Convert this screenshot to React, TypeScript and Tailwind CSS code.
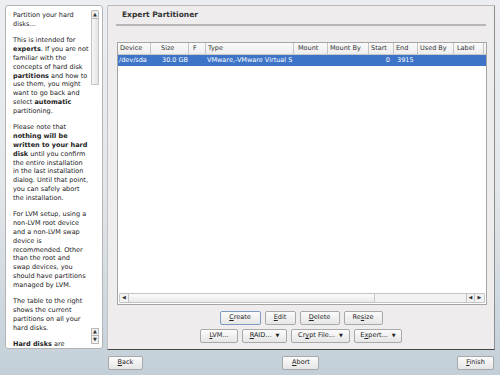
import type { ReactNode } from "react";

const font = { fontFamily: '"DejaVu Sans", Verdana, sans-serif' };

function Btn({ children, w, focused, menu }: { children: ReactNode; w: string; focused?: boolean; menu?: boolean }) {
  return (
    <div
      className={`${w} flex h-[14px] items-center justify-center gap-[4px] rounded-[2px] border bg-gradient-to-b from-[#fbfbfb] to-[#e6e6e6] text-[6.5px] text-[#222] ${
        focused ? "border-[#7d9bc4] from-[#f4f7fb] to-[#dde5ef]" : "border-[#a9a9a9]"
      }`}
    >
      <span>{children}</span>
      {menu && <span className="text-[5px]">▼</span>}
    </div>
  );
}

function U({ children }: { children: ReactNode }) {
  return <span className="underline underline-offset-[1px]">{children}</span>;
}

const columns = [
  { name: "Device", w: "w-[33px] pl-[2px]" },
  { name: "Size", w: "w-[38px] pl-[10px]" },
  { name: "F", w: "w-[17px] pl-[4px]" },
  { name: "Type", w: "w-[88px] pl-[2px]" },
  { name: "Mount", w: "w-[34px] pl-[4px]" },
  { name: "Mount By", w: "w-[41px] pl-[2px]" },
  { name: "Start", w: "w-[25px] pl-[2px]" },
  { name: "End", w: "w-[24px] pl-[2px]" },
  { name: "Used By", w: "w-[36px] pl-[2px]" },
  { name: "Label", w: "w-[30px] pl-[3px]" },
];

function HelpText() {
  return (
    <div className="flex-1 pl-[7px] pt-[5px] text-[6.5px] leading-[8.8px] whitespace-nowrap text-[#222]">
      <p className="mb-[7.8px]">Partition your hard<br />disks...</p>
      <p className="mb-[7.8px]">
        This is intended for<br />
        <b>experts</b>. If you are not<br />
        familiar with the<br />
        concepts of hard disk<br />
        <b>partitions</b> and how to<br />
        use them, you might<br />
        want to go back and<br />
        select <b>automatic</b><br />
        partitioning.
      </p>
      <p className="mb-[7.8px]">
        Please note that<br />
        <b>nothing will be</b><br />
        <b>written to your hard</b><br />
        <b>disk</b> until you confirm<br />
        the entire installation<br />
        in the last installation<br />
        dialog. Until that point,<br />
        you can safely abort<br />
        the installation.
      </p>
      <p className="mb-[7.8px]">
        For LVM setup, using a<br />
        non-LVM root device<br />
        and a non-LVM swap<br />
        device is<br />
        recommended. Other<br />
        than the root and<br />
        swap devices, you<br />
        should have partitions<br />
        managed by LVM.
      </p>
      <p className="mb-[7.8px]">
        The table to the right<br />
        shows the current<br />
        partitions on all your<br />
        hard disks.
      </p>
      <p>
        <b>Hard disks</b> are
      </p>
    </div>
  );
}

export default function App() {
  return (
    <div style={font} className="flex h-[375px] w-[500px] flex-col overflow-hidden bg-gradient-to-b from-[#eceef1] via-[#e3e7eb] to-[#c3cfd8]">
      <div className="flex h-[351px] pl-[5px] pt-[5px]">
        {/* help panel */}
        <div className="flex h-[344px] w-[98px] overflow-hidden rounded-[3px] border border-[#b4b4b4] bg-white">
          <HelpText />
          <div className="flex w-[11px] flex-col justify-between py-[4px] pr-[3px]">
            <div className="flex flex-col">
              <div className="flex h-[9px] items-center justify-center rounded-t-[2px] border border-[#b9b9b9] bg-[#f0f0f0] text-[5px] text-[#333]">▲</div>
              <div className="h-[66px] border-x border-b border-[#c4c4c4] bg-gradient-to-r from-[#f6f6f6] to-[#e4e4e4]" />
            </div>
            <div className="flex flex-col">
              <div className="flex h-[8px] items-center justify-center border border-[#b9b9b9] bg-[#f0f0f0] text-[5px] text-[#333]">▲</div>
              <div className="flex h-[8px] items-center justify-center border-x border-b border-[#b9b9b9] bg-[#f0f0f0] text-[5px] text-[#333]">▼</div>
            </div>
          </div>
        </div>

        {/* main panel */}
        <div className="ml-[4px] flex h-[345px] w-[388px] flex-col rounded-tl-[2px] border border-b-[#444] border-l-[#c2c2c2] border-r-[#8e8e8e] border-t-[#b8b8b8] border-b-dashed bg-[#efeced] px-[8px]">
          <div className="pl-[6px] pt-[3px] text-[7.5px] font-bold leading-[12px] text-[#333]">Expert Partitioner</div>
          <div className="mt-[3px] h-[2px] bg-[#b8b6b7]" />

          {/* table */}
          <div className="mt-[16px] ml-[1px] flex h-[263px] w-[370px] flex-col border border-[#a4a4a4] bg-white">
            <div className="flex h-[12px] border-b border-[#c8c8c8] bg-gradient-to-b from-[#fafafa] to-[#ededed] text-[6.5px] text-[#333]">
              {columns.map((c) => (
                <div key={c.name} className={`${c.w} flex items-center border-r border-[#c4c4c4]`}>
                  {c.name}
                </div>
              ))}
            </div>
            <div className="flex h-[11px] items-center bg-[#3d74c8] text-[6.5px] text-white">
              <div className="w-[33px] pl-[1px]">/dev/sda</div>
              <div className="w-[38px] pl-[11px]">30.0 GB</div>
              <div className="w-[17px]" />
              <div className="w-[88px] overflow-hidden whitespace-nowrap pl-[1px]">VMware,-VMware Virtual S</div>
              <div className="w-[34px]" />
              <div className="w-[41px]" />
              <div className="w-[25px] pr-[4px] text-right">0</div>
              <div className="w-[24px] pl-[3px]">3915</div>
            </div>
            <div className="flex-1" />
            <div className="mx-[1px] mb-[1px] flex h-[10px] items-stretch rounded-[1px] border border-[#c4c4c4] bg-[#f2f2f2]">
              <div className="flex w-[9px] items-center justify-center border-r border-[#c4c4c4] text-[5px] text-[#333]">◀</div>
              <div className="w-[246px] border-r border-[#c8c8c8] bg-gradient-to-b from-[#fbfbfb] to-[#e9e9e9]" />
              <div className="flex-1" />
              <div className="flex w-[9px] items-center justify-center border-x border-[#c4c4c4] text-[5px] text-[#333]">◀</div>
              <div className="flex w-[9px] items-center justify-center text-[5px] text-[#333]">▶</div>
            </div>
          </div>

          {/* action buttons */}
          <div className="mt-[6px] flex justify-center gap-[4px]">
            <Btn w="w-[41px]" focused><U>C</U>reate</Btn>
            <Btn w="w-[31px]"><U>E</U>dit</Btn>
            <Btn w="w-[40px]"><U>D</U>elete</Btn>
            <Btn w="w-[39px]">Re<U>s</U>ize</Btn>
          </div>
          <div className="mt-[4px] flex justify-center gap-[4px]">
            <Btn w="w-[38px]"><U>L</U>VM...</Btn>
            <Btn w="w-[45px]" menu><U>R</U>AID...</Btn>
            <Btn w="w-[59px]" menu>Cr<U>y</U>pt File...</Btn>
            <Btn w="w-[48px]" menu>E<U>x</U>pert...</Btn>
          </div>
        </div>
      </div>

      {/* bottom buttons */}
      <div className="mt-[5px] grid grid-cols-3 pl-[108px] pr-[6px]">
        <div className="justify-self-start"><Btn w="w-[35px]"><U>B</U>ack</Btn></div>
        <div className="justify-self-center"><Btn w="w-[37px]"><U>A</U>bort</Btn></div>
        <div className="justify-self-end"><Btn w="w-[37px]"><U>F</U>inish</Btn></div>
      </div>
    </div>
  );
}
